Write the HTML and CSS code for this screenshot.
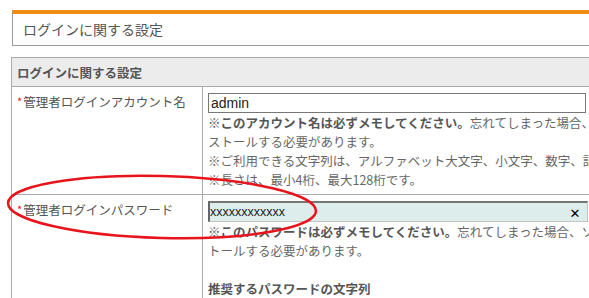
FILE: index.html
```html
<!DOCTYPE html>
<html lang="ja">
<head>
  <meta charset="UTF-8">
  <meta name="viewport" content="width=device-width, initial-scale=1.0">
  <title>ログインに関する設定</title>
  <link rel="stylesheet" href="styles.css">
</head>
<body>
  <div class="page">
    <div class="page-title">ログインに関する設定</div>

    <table class="settings">
      <colgroup>
        <col class="col-label">
        <col>
      </colgroup>
      <tr>
        <th colspan="2">ログインに関する設定</th>
      </tr>
      <tr>
        <td class="label"><span class="req">*</span>管理者ログインアカウント名</td>
        <td class="field">
          <input type="text" class="text-input" value="admin">
          <p class="note"><b>※このアカウント名は必ずメモしてください。</b>忘れてしまった場合、ソフトを再インストールする必要があります。</p>
          <p class="note">※ご利用できる文字列は、アルファベット大文字、小文字、数字、記号です。</p>
          <p class="note">※長さは、最小4桁、最大128桁です。</p>
        </td>
      </tr>
      <tr>
        <td class="label"><span class="req">*</span>管理者ログインパスワード</td>
        <td class="field">
          <div class="pw-field">
            <input type="text" class="pw-input" value="xxxxxxxxxxxx">
            <span class="clear">✕</span>
          </div>
          <p class="note"><b>※このパスワードは必ずメモしてください。</b>忘れてしまった場合、ソフトを再インストールする必要があります。</p>
          <p class="note sub-title"><b>推奨するパスワードの文字列</b></p>
          <p class="note">英字大文字、小文字、数字、記号を組み合わせた8桁以上の文字列</p>
        </td>
      </tr>
    </table>

    <!-- red marker drawn over the password row -->
    <svg class="marker" width="330" height="80" viewBox="0 0 330 80">
      <ellipse cx="162" cy="37" rx="154" ry="31" fill="none" stroke="#e8141c" stroke-width="2.5" transform="rotate(1.5 162 37)"/>
    </svg>
  </div>
</body>
</html>
```

FILE: styles.css
```css
html, body {
  margin: 0;
  overflow: hidden;
}

body {
  font-family: "Noto Sans CJK JP", "DejaVu Sans", sans-serif;
  font-size: 12.5px;
  color: #555;
  background: #fff;
}

.page {
  position: relative;
  width: 720px;
  padding: 10px 0 0 11px;
}

.page-title {
  margin-left: 1px;
  height: 31px;
  line-height: 31px;
  padding-left: 10px;
  border-top: 4px solid #f08c12;
  border-left: 1px solid #9a9a9a;
  border-bottom: 1px solid #9a9a9a;
  font-size: 14px;
  color: #555;
  margin-bottom: 11px;
}

.settings {
  width: 700px;
  border-collapse: collapse;
  table-layout: fixed;
}

.col-label {
  width: 191px;
}

.settings th {
  height: 28px;
  padding: 0 5px;
  text-align: left;
  background: #ececec;
  border: 1px solid #aaa;
  font-weight: bold;
  font-size: 12.5px;
  color: #555;
}

.settings td {
  border: 1px solid #aaa;
  vertical-align: top;
  padding: 5px;
  line-height: 19px;
}

.label {
  padding-left: 5px;
  font-size: 12.5px;
  color: #555;
}

.req {
  color: #e8141c;
  font-size: 11px;
  vertical-align: top;
  margin-right: 1px;
}

.text-input {
  display: block;
  box-sizing: border-box;
  width: 378px;
  height: 20px;
  margin: 1px 0 0;
  padding: 0 2px;
  border: 1px solid #777;
  font-family: "Liberation Sans", sans-serif;
  font-size: 14px;
  color: #222;
}

.pw-field {
  display: flex;
  align-items: center;
  box-sizing: border-box;
  width: 380px;
  height: 21px;
  margin-top: 1px;
  background: #dcedec;
  border: 1px solid #c4c4c4;
  border-top: 2px solid #777;
  border-left: 2px solid #666;
}

.pw-input {
  flex: 1;
  min-width: 0;
  border: none;
  background: transparent;
  padding: 0;
  font-family: "Liberation Sans", sans-serif;
  font-size: 12.5px;
  color: #222;
}

.clear {
  width: 14px;
  margin-right: 5px;
  font-size: 13px;
  font-weight: bold;
  color: #000;
  text-align: center;
}

.note {
  margin: 0;
  width: 478px;
  font-size: 12.5px;
  line-height: 19px;
  color: #666;
}

.note b {
  color: #555;
}

.sub-title {
  margin-top: 19px;
}

.marker {
  position: absolute;
  left: 0;
  top: 170px;
}
```
